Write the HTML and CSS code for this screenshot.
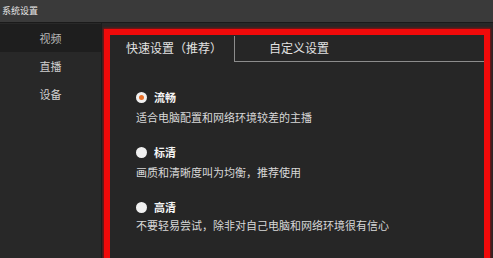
FILE: index.html
```html
<!DOCTYPE html>
<html lang="zh-CN">
<head>
    <meta charset="UTF-8">
    <title>系统设置</title>
    <link rel="stylesheet" href="styles.css">
</head>
<body>
    <div class="titlebar">系统设置</div>
    <div class="main">
        <div class="sidebar">
            <div class="nav-item active">视频</div>
            <div class="nav-item">直播</div>
            <div class="nav-item">设备</div>
        </div>
        <div class="panel">
            <div class="highlight-box">
                <div class="tabs">
                    <div class="tab active">快速设置（推荐）</div>
                    <div class="tab">自定义设置</div>
                </div>
                <div class="options">
                    <div class="option">
                        <div class="radio-row">
                            <span class="radio checked"></span>
                            <span class="radio-label">流畅</span>
                        </div>
                        <div class="desc">适合电脑配置和网络环境较差的主播</div>
                    </div>
                    <div class="option">
                        <div class="radio-row">
                            <span class="radio"></span>
                            <span class="radio-label">标清</span>
                        </div>
                        <div class="desc">画质和清晰度叫为均衡，推荐使用</div>
                    </div>
                    <div class="option">
                        <div class="radio-row">
                            <span class="radio"></span>
                            <span class="radio-label">高清</span>
                        </div>
                        <div class="desc">不要轻易尝试，除非对自己电脑和网络环境很有信心</div>
                    </div>
                </div>
            </div>
        </div>
    </div>
</body>
</html>
```

FILE: styles.css
```css
html, body {
    margin: 0;
    padding: 0;
}
body {
    width: 493px;
    height: 258px;
    overflow: hidden;
    background: #262626;
    color: #dcdcdc;
    font-family: "Noto Sans CJK SC", "Noto Sans", sans-serif;
}
.titlebar {
    height: 22px;
    line-height: 22px;
    padding-left: 2px;
    font-size: 9px;
    color: #e6e6e6;
    background: #3a3a3a;
    border-bottom: 1px solid #1a1a1a;
}
.main {
    display: flex;
    height: 235px;
    overflow: hidden;
}
.sidebar {
    width: 101px;
    padding-top: 1px;
    background: #282828;
    border-right: 1px solid #1c1c1c;
}
.nav-item {
    height: 28px;
    line-height: 28px;
    text-align: center;
    font-size: 11px;
    color: #d0d0d0;
}
.nav-item.active {
    background: #1e1e1e;
    color: #b8b8b8;
}
.panel {
    flex: 1;
    padding: 6px 3px 0 2px;
    background: #272727;
    overflow: hidden;
}
.highlight-box {
    height: 240px;
    border: 6px solid #f00a0a;
    border-bottom: none;
    box-shadow: 0 0 2px 1px rgba(200, 0, 0, 0.6);
    background: #262626;
}
.tabs {
    display: flex;
    height: 26px;
    margin-top: 1px;
}
.tab {
    font-size: 12px;
    line-height: 24px;
    color: #e2e2e2;
}
.tab.active {
    width: 108px;
    padding-left: 16px;
    border-right: 1px solid #8c8c8c;
}
.tab + .tab {
    flex: 1;
    padding-left: 34px;
    border-bottom: 1px solid #8c8c8c;
}
.options {
    display: flex;
    flex-direction: column;
    gap: 19px;
    padding: 27px 0 0 26px;
}
.option {
    display: flex;
    flex-direction: column;
    gap: 4px;
}
.option:last-child {
    gap: 2px;
}
.radio-row {
    display: flex;
    align-items: center;
    gap: 7px;
    height: 16px;
}
.radio {
    width: 11px;
    height: 11px;
    border-radius: 50%;
    background: #f0f0f0;
    display: flex;
    align-items: center;
    justify-content: center;
}
.radio.checked::after {
    content: "";
    width: 5px;
    height: 5px;
    border-radius: 50%;
    background: #e8702a;
}
.radio-label {
    font-size: 11px;
    font-weight: bold;
    color: #f4f4f4;
}
.desc {
    height: 16px;
    line-height: 16px;
    font-size: 11px;
    color: #d8d8d8;
}
```
